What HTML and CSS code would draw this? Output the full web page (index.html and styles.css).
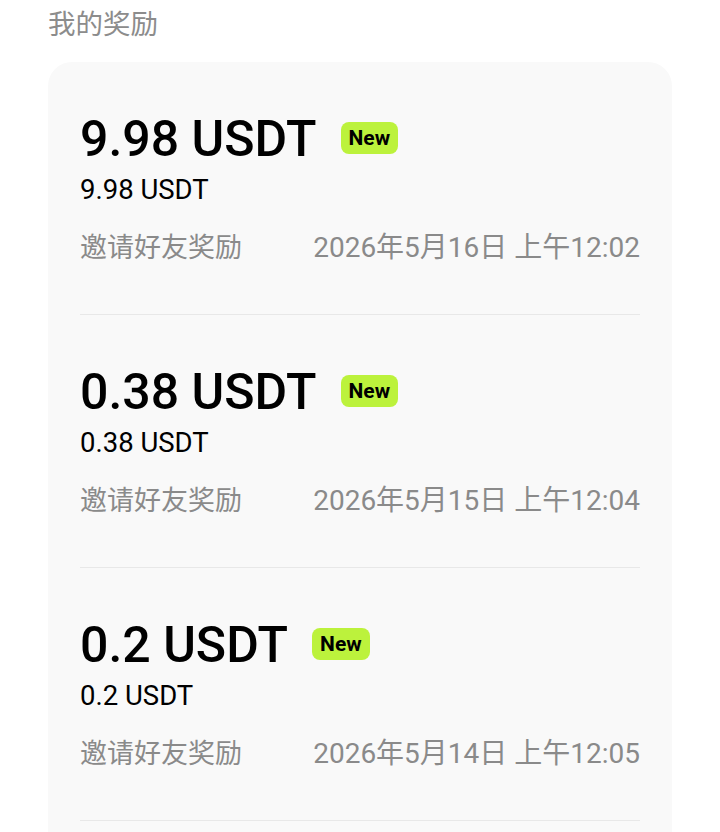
FILE: index.html
```html
<!DOCTYPE html>
<html lang="zh-CN">
  <head>
    <title>我的奖励</title>
    <meta charset="UTF-8" />
    <meta name="viewport" content="width=device-width" />
    <link rel="stylesheet" href="styles.css">
  </head>
  <body>
    <!-- 标题 -->
    <h2 class="page-title">我的奖励</h2>

    <!-- 奖励列表 -->
    <div class="reward-card">
      <div class="reward-item">
        <div class="reward-head">
          <span class="reward-amount">9.98 USDT</span>
          <span class="badge-new">New</span>
        </div>
        <div class="reward-sub">9.98 USDT</div>
        <div class="reward-meta">
          <span class="meta-label">邀请好友奖励</span>
          <span class="meta-time">2026年5月16日 上午12:02</span>
        </div>
      </div>

      <div class="reward-item">
        <div class="reward-head">
          <span class="reward-amount">0.38 USDT</span>
          <span class="badge-new">New</span>
        </div>
        <div class="reward-sub">0.38 USDT</div>
        <div class="reward-meta">
          <span class="meta-label">邀请好友奖励</span>
          <span class="meta-time">2026年5月15日 上午12:04</span>
        </div>
      </div>

      <div class="reward-item">
        <div class="reward-head">
          <span class="reward-amount">0.2 USDT</span>
          <span class="badge-new">New</span>
        </div>
        <div class="reward-sub">0.2 USDT</div>
        <div class="reward-meta">
          <span class="meta-label">邀请好友奖励</span>
          <span class="meta-time">2026年5月14日 上午12:05</span>
        </div>
      </div>

      <!-- 下一条被截断，只留空白 -->
      <div class="reward-rest"></div>
    </div>
  </body>
</html>
```

FILE: styles.css
```css
* {
  box-sizing: border-box;
}

body {
  margin: 0;
  background-color: #ffffff;
  color: #000000;
  font-family: Roboto, "Noto Sans CJK SC", sans-serif;
  height: 832px;
  overflow: hidden;
}

/* 标题 */
.page-title {
  margin: 0;
  padding: 3px 48px 0;
  font-size: 27.5px;
  font-weight: 400;
  line-height: 38px;
  color: #8c8c8c;
  font-family: "Noto Sans CJK SC", sans-serif;
}

/* 卡片 */
.reward-card {
  margin: 21px 48px 0;
  padding: 0 32px;
  background-color: #f9f9f9;
  border-radius: 24px;
}

.reward-item {
  padding: 47px 0 48px;
  border-bottom: 1px solid #e8e8e8;
}

.reward-rest {
  height: 40px;
}

.reward-head {
  display: flex;
  align-items: center;
  gap: 24px;
  height: 60px;
}

.reward-amount {
  font-size: 50px;
  font-weight: 500;
  line-height: 60px;
}

.badge-new {
  background-color: #bcf23c;
  border-radius: 8px;
  padding: 0 8px;
  height: 32px;
  line-height: 32px;
  font-size: 21px;
  font-weight: 700;
  margin-top: -2px;
}

.reward-sub {
  margin-top: 5px;
  font-size: 27.5px;
  line-height: 32px;
}

.reward-meta {
  margin-top: 24px;
  display: flex;
  justify-content: space-between;
  align-items: baseline;
  line-height: 36px;
  color: #8a8a8a;
}

.meta-label {
  font-size: 27px;
}

.meta-time {
  font-size: 28px;
}
```
